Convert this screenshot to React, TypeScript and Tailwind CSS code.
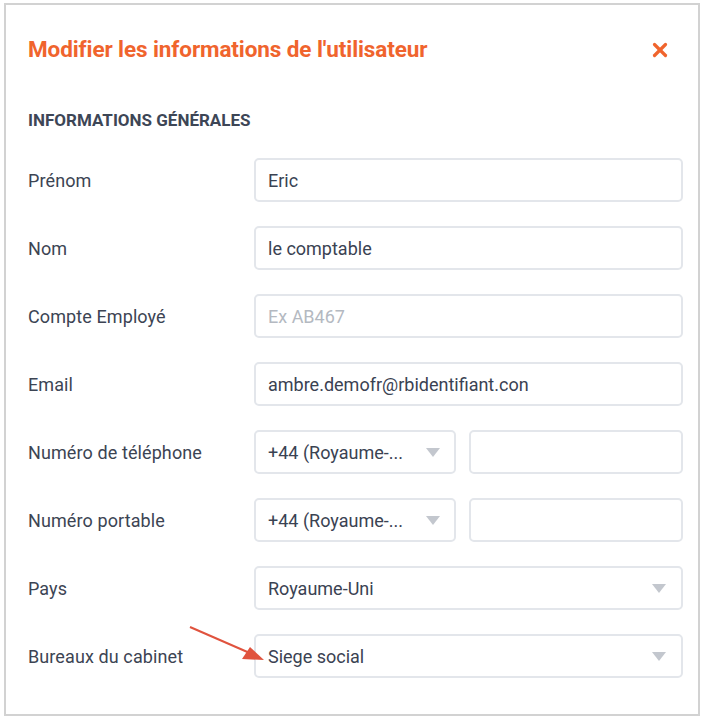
import { X } from "lucide-react";

type Row = { label: string; kind: "text" | "phone" | "select"; value?: string; placeholder?: string };

const rows: Row[] = [
  { label: "Prénom", kind: "text", value: "Eric" },
  { label: "Nom", kind: "text", value: "le comptable" },
  { label: "Compte Employé", kind: "text", placeholder: "Ex AB467" },
  { label: "Email", kind: "text", value: "ambre.demofr@rbidentifiant.con" },
  { label: "Numéro de téléphone", kind: "phone", value: "+44 (Royaume-..." },
  { label: "Numéro portable", kind: "phone", value: "+44 (Royaume-..." },
  { label: "Pays", kind: "select", value: "Royaume-Uni" },
  { label: "Bureaux du cabinet", kind: "select", value: "Siege social" },
];

const Caret = () => (
  <svg width="14" height="9" viewBox="0 0 14 9" className="shrink-0">
    <path d="M0 0 L14 0 L7 9 Z" fill="#c3c7ce" />
  </svg>
);

const box = "h-[44px] rounded-[5px] border-2 border-[#e3e6eb] bg-white flex items-center px-[12px] text-[18px] text-[#3a4252]";

const Field = ({ row }: { row: Row }) => {
  if (row.kind === "phone") {
    return (
      <div className="flex gap-[13px]">
        <div className={`${box} w-[202px] justify-between pr-[14px]`}>
          <span>{row.value}</span>
          <Caret />
        </div>
        <div className={`${box} flex-1`} />
      </div>
    );
  }
  if (row.kind === "select") {
    return (
      <div className={`${box} justify-between pr-[15px]`}>
        <span>{row.value}</span>
        <Caret />
      </div>
    );
  }
  return (
    <div className={box}>
      {row.value ? <span>{row.value}</span> : <span className="text-[#b4b9c1]">{row.placeholder}</span>}
    </div>
  );
};

export default function App() {
  return (
    <div className="bg-white w-[710px] h-[722px] pt-[3px] pl-[4px]" style={{ fontFamily: "Roboto, 'Liberation Sans', sans-serif" }}>
      <div className="relative w-[696px] h-[713px] border-2 border-[#d2d2d2] bg-white pl-[22px] pr-[15px]">
        <div className="flex items-center justify-between h-[88px] pt-[2px]">
          <h1 className="text-[22.5px] font-bold text-[#f0642d] tracking-[-0.1px]">Modifier les informations de l'utilisateur</h1>
          <X className="w-[22px] h-[22px] text-[#f0642d] mr-[12px]" strokeWidth={3.5} />
        </div>
        <h2 className="mt-[17px] text-[17px] font-bold text-[#3d4656] uppercase leading-[20px]">Informations générales</h2>
        <div className="mt-[28px] flex flex-col gap-[24px]">
          {rows.map((row) => (
            <div key={row.label} className="flex items-center">
              <div className="w-[226px] shrink-0 text-[18px] text-[#3c4453] tracking-[0.1px]">{row.label}</div>
              <div className="flex-1">
                <Field row={row} />
              </div>
            </div>
          ))}
        </div>
        <svg className="absolute left-[180px] top-[618px]" width="90" height="45" viewBox="0 0 90 45">
          <line x1="4" y1="4" x2="66" y2="31" stroke="#e0533e" strokeWidth="2" />
          <path d="M78 37 L56 36 L64 24 Z" fill="#e0533e" />
        </svg>
      </div>
    </div>
  );
}
